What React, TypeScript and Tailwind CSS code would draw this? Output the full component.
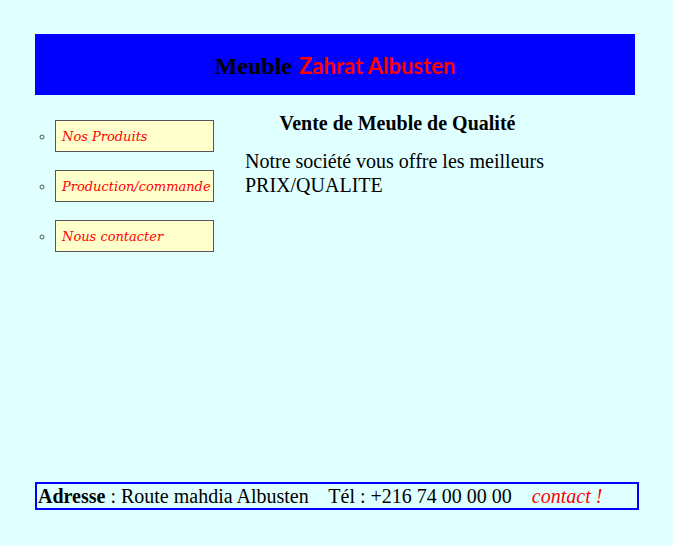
import React from "react";

export default function App() {
  const serif = { fontFamily: '"Liberation Serif", "Times New Roman", serif' };
  return (
    <div className="flex h-[546px] w-[673px] flex-col overflow-hidden bg-[#e0ffff] pt-[34px]" style={serif}>
      <div className="ml-[35px] w-[600px] flex-1">
        <div className="flex h-[61px] items-center justify-center bg-[#0000ff] pt-[2px]">
          <span className="text-[24px] font-bold text-black">Meuble</span>
          <span className="ml-[7px] text-[22px] font-bold text-[#ff0000]" style={{ fontFamily: 'Lato, "Noto Sans", sans-serif' }}>
            Zahrat Albusten
          </span>
        </div>
        <div className="flex">
          <ul className="mt-[25px] w-[210px] list-[circle] pl-[20px]">
            {["Nos Produits", "Production/commande", "Nous contacter"].map((t) => (
              <li key={t} className="mb-[18px] text-[#555] marker:text-[15px]">
                <div
                  className="flex h-[32px] w-[159px] items-center border border-[#555] bg-[#ffffcc] pl-[6px] pt-[1px] text-[13px] italic text-[#ff0000]"
                  style={{ fontFamily: '"DejaVu Serif", Georgia, serif' }}
                >
                  {t}
                </div>
              </li>
            ))}
          </ul>
          <div className="w-[305px] pt-[17px]">
            <h2 className="text-center text-[20px] font-bold leading-[23px] text-black">Vente de Meuble de Qualité</h2>
            <p className="mt-[14px] text-[20px] leading-[24px] text-black">
              Notre société vous offre les meilleurs PRIX/QUALITE
            </p>
          </div>
        </div>
      </div>
      <div className="mb-[36px] ml-[35px] flex h-[28px] w-[604px] items-center border-2 border-[#0000ff] pl-[1px] text-[20px] text-black">
        <span className="font-bold">Adresse</span>
        <span className="whitespace-pre"> : Route mahdia Albusten    Tél : +216 74 00 00 00    </span>
        <span className="italic text-[#ff0000]">contact !</span>
      </div>
    </div>
  );
}
